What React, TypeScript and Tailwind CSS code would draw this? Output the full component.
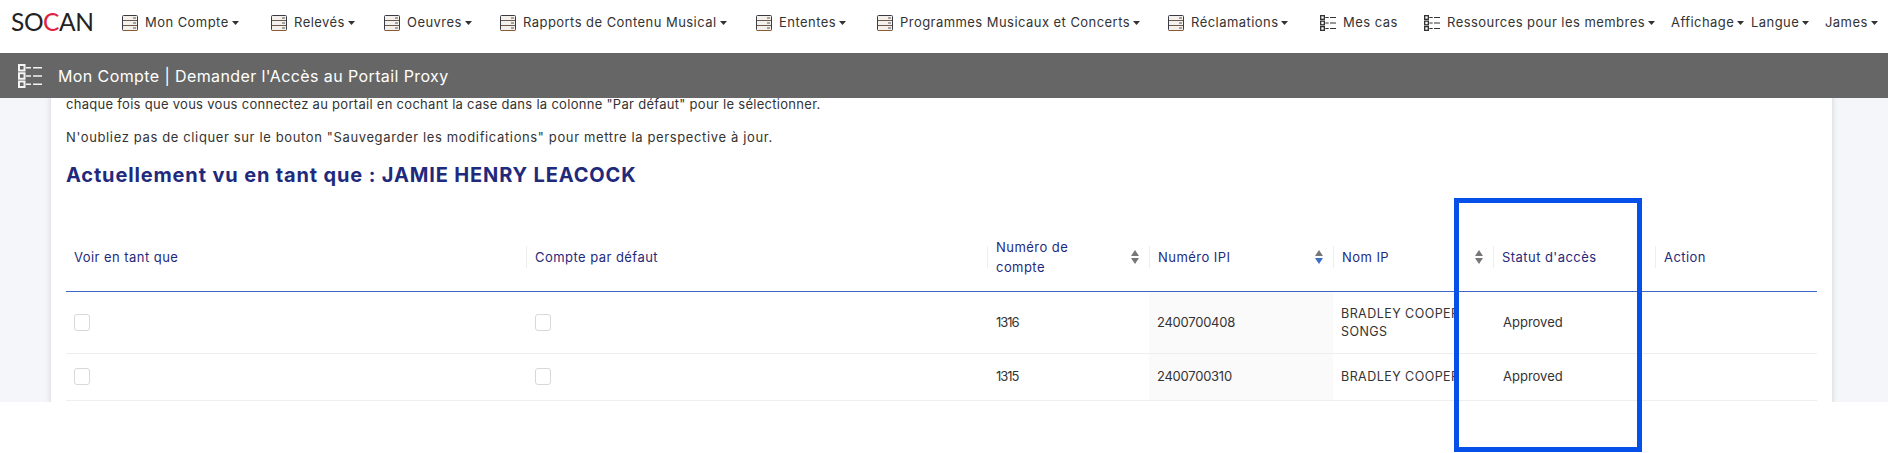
const font = "font-['Inter','Liberation_Sans',sans-serif]";

function ServerIcon() {
  return (
    <svg width="16" height="16" viewBox="0 0 16 16" className="shrink-0" fill="none">
      <rect x="0.5" y="0.5" width="15" height="15" rx="1" fill="#f4f1ec" stroke="#3b3b45" />
      <path d="M1 5.5h14M1 10.5h14" stroke="#6b5a50" />
      <path d="M1 15.5h14" stroke="#8a5a33" />
      <path d="M11 3h3M11 8h3M11 13h3" stroke="#555" />
    </svg>
  );
}

function ListIcon({ size = 16, color = "#333" }: { size?: number; color?: string }) {
  return (
    <svg width={size} height={size} viewBox="0 0 24 24" className="shrink-0" fill="none" stroke={color}>
      <rect x="1" y="1" width="5.5" height="5.5" strokeWidth="2" />
      <rect x="1" y="9.25" width="5.5" height="5.5" strokeWidth="2" />
      <rect x="1" y="17.5" width="5.5" height="5.5" strokeWidth="2" />
      <path d="M8 3.75h5M15 3.75h9M8 12h5M15 12h9M8 20.25h5M15 20.25h9" strokeWidth="1.5" />
    </svg>
  );
}

function Caret() {
  return (
    <svg width="7" height="4" viewBox="0 0 7 4" className="ml-[3px] shrink-0">
      <path d="M0 0h7L3.5 4z" fill="#333" />
    </svg>
  );
}

function SortIcon({ active }: { active?: boolean }) {
  return (
    <svg width="8" height="14" viewBox="0 0 8 14" className="shrink-0">
      <path d="M4 0l4 6H0z" fill="#777" />
      <path d="M4 14l4-6H0z" fill={active ? "#3b6fc4" : "#777"} />
    </svg>
  );
}

const navItems = [
  { label: "Mon Compte", width: "w-[149px]", icon: "server", caret: true },
  { label: "Relevés", width: "w-[113px]", icon: "server", caret: true },
  { label: "Oeuvres", width: "w-[116px]", icon: "server", caret: true },
  { label: "Rapports de Contenu Musical", width: "w-[256px]", icon: "server", caret: true },
  { label: "Ententes", width: "w-[121px]", icon: "server", caret: true },
  { label: "Programmes Musicaux et Concerts", width: "w-[291px]", icon: "server", caret: true },
  { label: "Réclamations", width: "w-[152px]", icon: "server", caret: true },
  { label: "Mes cas", width: "w-[104px]", icon: "list", caret: false },
  { label: "Ressources pour les membres", width: "w-[247px]", icon: "list", caret: true },
  { label: "Affichage", width: "w-[80px]", caret: true },
  { label: "Langue", width: "w-[74px]", caret: true },
  { label: "James", width: "w-[54px]", caret: true },
];

const rows = [
  { account: "1316", ipi: "2400700408", name: "BRADLEY COOPER SONGS", height: "h-[62px]" },
  { account: "1315", ipi: "2400700310", name: "BRADLEY COOPER", height: "h-[47px]" },
];

function HeaderCell({ label, sort, active, first, wrap }: { label: string; sort?: boolean; active?: boolean; first?: boolean; wrap?: boolean }) {
  return (
    <th className="p-0 text-left font-normal">
      <div className={`flex h-[22px] items-center justify-between pr-[10px] ${first ? "pl-2" : "border-l border-[#eeeeee] pl-2"}`}>
        <span className={`leading-[20px] ${wrap ? "w-[90px]" : ""}`}>{label}</span>
        {sort && <SortIcon active={active} />}
      </div>
    </th>
  );
}

function Checkbox() {
  return <div className="h-[17px] w-[16px] rounded-[3px] border border-[#d8d8d8] bg-white" />;
}

export default function App() {
  return (
    <div className={`relative h-[453px] w-[1888px] overflow-hidden bg-white text-[13px] tracking-[0.45px] text-[#333] ${font}`}>
      <nav className="flex h-[53px] items-center pb-[8px] pl-[11px]">
        <div className="w-[111px] font-['Lato',sans-serif] text-[24.5px] font-normal leading-none tracking-[-0.4px] text-[#222]">
          SO<span className="text-[#e0203f]">C</span>AN
        </div>
        {navItems.map((item) => (
          <div key={item.label} className={`flex shrink-0 items-center whitespace-nowrap ${item.width}`}>
            {item.icon === "server" && <span className="mr-[7px]"><ServerIcon /></span>}
            {item.icon === "list" && <span className="mr-[7px]"><ListIcon /></span>}
            {item.label}
            {item.caret && <Caret />}
          </div>
        ))}
      </nav>

      <header className="flex h-[45px] items-center bg-[#666666] pl-[18px] text-white">
        <ListIcon size={24} color="#f3f3f3" />
        <span className="ml-[16px] text-[16px] tracking-[0.4px]">Mon Compte | Demander l'Accès au Portail Proxy</span>
      </header>

      <main className="h-[304px] overflow-hidden bg-[#f5f6fa] pl-[51px] pr-[56px]">
        <div className="h-[320px] bg-white pl-[15px] pr-[15px] shadow-[0_0_6px_rgba(0,0,0,0.15)]">
          <p className="-mt-[4px] leading-[20px] tracking-[0.29px]">
            chaque fois que vous vous connectez au portail en cochant la case dans la colonne "Par défaut" pour le sélectionner.
          </p>
          <p className="mt-[13px] leading-[20px] tracking-[0.63px]">
            N'oubliez pas de cliquer sur le bouton "Sauvegarder les modifications" pour mettre la perspective à jour.
          </p>
          <h2 className="mt-[14px] text-[20px] font-bold leading-[28px] tracking-[0.85px] text-[#1f2a7c]">
            Actuellement vu en tant que : JAMIE HENRY LEACOCK
          </h2>
          <table className="mt-[34px] w-[1751px] table-fixed border-collapse">
            <colgroup>
              <col className="w-[460px]" />
              <col className="w-[461px]" />
              <col className="w-[162px]" />
              <col className="w-[184px]" />
              <col className="w-[160px]" />
              <col className="w-[162px]" />
              <col className="w-[162px]" />
            </colgroup>
            <thead>
              <tr className="h-[68px] border-b border-[#3a66c4] text-[#1f2a7c]">
                <HeaderCell label="Voir en tant que" first />
                <HeaderCell label="Compte par défaut" />
                <HeaderCell label="Numéro de compte" sort wrap />
                <HeaderCell label="Numéro IPI" sort active />
                <HeaderCell label="Nom IP" sort />
                <HeaderCell label="Statut d'accès" />
                <HeaderCell label="Action" />
              </tr>
            </thead>
            <tbody>
              {rows.map((row) => (
                <tr key={row.account} className={`border-b border-[#eeeeee] ${row.height}`}>
                  <td className="pl-2"><Checkbox /></td>
                  <td className="pl-[9px]"><Checkbox /></td>
                  <td className="pl-[9px] pt-[1px] tracking-[-1px]">{row.account}</td>
                  <td className="bg-[#fafafa] pl-2 pt-[1px] tracking-[-0.25px]">{row.ipi}</td>
                  <td className="pl-2 pr-[8px] pt-[1px] text-[12.5px] leading-[18px]">{row.name}</td>
                  <td className="pl-[10px] pt-[1px] tracking-normal">Approved</td>
                  <td />
                </tr>
              ))}
            </tbody>
          </table>
        </div>
      </main>

      {/* annotation drawn over the screenshot */}
      <div className="absolute left-[1454px] top-[198px] h-[254px] w-[188px] border-[5px] border-[#0450e8]" />
    </div>
  );
}
